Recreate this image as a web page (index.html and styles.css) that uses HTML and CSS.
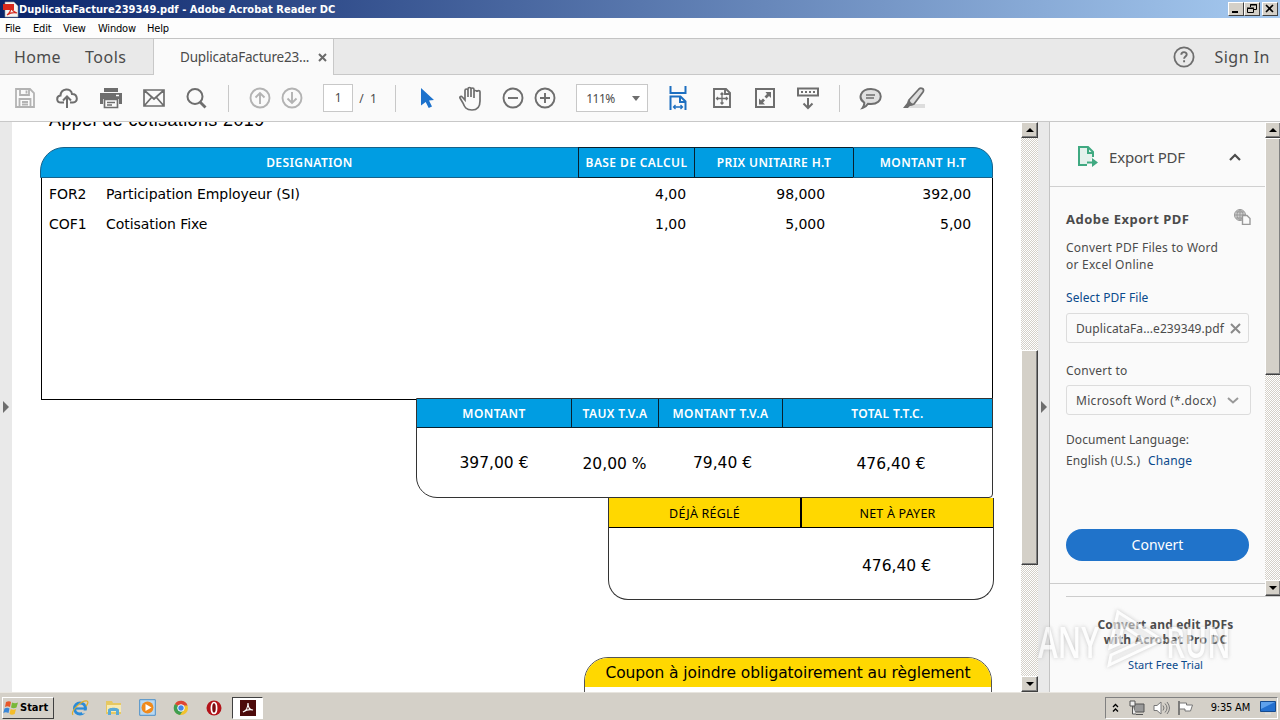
FILE: index.html
```html
<!DOCTYPE html>
<html lang="en">
<head>
  <meta charset="UTF-8">
  <title>DuplicataFacture239349.pdf - Adobe Acrobat Reader DC</title>
  <link rel="stylesheet" href="styles.css">
</head>
<body>

<!-- Title bar -->
<div class="titlebar">
  <svg class="app-icon" width="17" height="17" viewBox="0 0 17 17"><path d="M3 1h9l4 4v11H3z" fill="#f4f4f4" stroke="#999" stroke-width=".6"/><path d="M1 3h11v6H1z" fill="#d8281c"/><path d="M5 14c3-2 4-5 4-8 1 4 3 5 6 6-4-1-7 0-10 2z" fill="none" stroke="#d8281c" stroke-width="1.2"/></svg>
  <span class="titlebar-text">DuplicataFacture239349.pdf - Adobe Acrobat Reader DC</span>
  <div class="win-buttons">
    <div class="win-btn"><svg width="14" height="12"><path d="M3 9h6" stroke="#000" stroke-width="2"/></svg></div>
    <div class="win-btn"><svg width="14" height="12" fill="none" stroke="#000"><path d="M5.5 4V1.500h6v5H9M5 2h7M2.500 5.500h6v4h-6zM2 5h7"/></svg></div>
    <div class="win-btn close"><svg width="14" height="12"><path d="M3 2l7 7M10 2l-7 7" stroke="#000" stroke-width="1.600"/></svg></div>
  </div>
</div>

<!-- Menu -->
<div class="menubar">
  <span class="m-file">File</span><span class="m-edit">Edit</span><span class="m-view">View</span><span class="m-window">Window</span><span>Help</span>
</div>

<!-- Tabs -->
<div class="tabs">
  <div class="tabs-left"><span class="home">Home</span><span class="tools">Tools</span></div>
  <div class="tab-active">
    <span>DuplicataFacture23...</span>
    <svg width="9" height="9" viewBox="0 0 9 9"><path d="M1 1l7 7M8 1l-7 7" stroke="#6a6a6a" stroke-width="2"/></svg>
  </div>
  <div class="tabs-right">
    <svg width="22" height="22" viewBox="0 0 22 22" fill="none" stroke="#6e6e6e"><circle cx="11" cy="11" r="9.600" stroke-width="1.800"/><path d="M8.300 8.800c0-3.500 5.400-3.500 5.400-.3 0 2-2.600 2-2.600 4.200M11.100 14.300v2" stroke-width="1.900"/></svg>
    <span>Sign In</span>
  </div>
</div>

<!-- Toolbar -->
<div class="toolbar">
  <div class="tool-group files">
    <svg width="22" height="22" viewBox="0 0 22 22" fill="none" stroke="#b3b3b3" stroke-width="1.800"><path d="M2 2h14l4 4v14H2zM6 2v6h9V2M5.500 20v-8h11v8M8 15h6M8 17.500h6M12.500 3.500v3"/></svg>
    <svg width="24" height="22" viewBox="0 0 24 22" fill="none" stroke="#6e6e6e" stroke-width="2"><path d="M9 15.500H6C1 15.500 1 9 5.500 8.500 6 1 16 .5 17 7c6 0 6.500 8.500 1 8.500h-3M12 21V10M8 13.500l4-4 4 4"/></svg>
    <svg width="24" height="22" viewBox="0 0 24 22"><path d="M5 1h14v4H5zM1 6h22v11h-3v-5H4v5H1z" fill="#6e6e6e"/><path d="M5.500 12.500h13v8h-13zM8 15.500h8M8 18h5" fill="none" stroke="#6e6e6e" stroke-width="1.700"/><path d="M17 8.500h3" stroke="#fff" stroke-width="1.500"/></svg>
    <svg width="24" height="20" viewBox="0 0 24 20" fill="none" stroke="#6e6e6e" stroke-width="1.700"><path d="M2 2h20v16H2zM2.500 2.500L12 11l9.500-8.500M2.500 17.500l7-8M21.500 17.500l-7-8"/></svg>
    <svg width="22" height="22" viewBox="0 0 22 22" fill="none" stroke="#6e6e6e"><circle cx="10" cy="9.500" r="7.500" stroke-width="2"/><path d="M15 15l5.500 5.500" stroke-width="2.800"/></svg>
  </div>
  <div class="sep"></div>
  <div class="tool-group pages">
    <svg width="22" height="22" viewBox="0 0 22 22" fill="none" stroke="#b3b3b3" stroke-width="1.900"><circle cx="11" cy="11" r="9.500"/><path d="M11 17V6M6.500 10.500L11 6l4.500 4.500"/></svg>
    <svg width="22" height="22" viewBox="0 0 22 22" fill="none" stroke="#b3b3b3" stroke-width="1.900"><circle cx="11" cy="11" r="9.500"/><path d="M11 5v11M6.500 11.500L11 16l4.500-4.500"/></svg>
  </div>
  <div class="page-input">1</div>
  <span class="page-total">/&nbsp; 1</span>
  <div class="sep sep-select"></div>
  <svg class="cursor" width="15" height="22" viewBox="0 0 15 22"><path d="M1 1l13 12-5 .5 3 6-3.300 1.500-3-6L1 18.500z" fill="#1d72cc"/></svg>
  <svg class="hand" width="24" height="25" viewBox="0 0 24 25" fill="none" stroke="#6e6e6e" stroke-width="1.700"><path d="M7 14V4.500c0-2 3-2 3 0V11 3c0-2 3-2 3 0v8-7.500c0-2 3-2 3 0V12 6c0-2 3-2 3 0v-.2c0-1.500 3-1.500 3 0V15c0 6-3 9-8 9-6 0-7.500-3-9-7l-3-5c-.7-1.500 1.300-2.300 2.300-1z"/></svg>
  <svg class="zoom-out" width="22" height="22" viewBox="0 0 22 22" fill="none" stroke="#6e6e6e" stroke-width="1.900"><circle cx="11" cy="11" r="9.500"/><path d="M6 11h10"/></svg>
  <svg class="zoom-in" width="22" height="22" viewBox="0 0 22 22" fill="none" stroke="#6e6e6e" stroke-width="1.900"><circle cx="11" cy="11" r="9.500"/><path d="M6 11h10M11 6v10"/></svg>
  <div class="zoom-select"><span>111%</span><svg width="8" height="5"><path d="M0 0h8L4 5z" fill="#6e6e6e"/></svg></div>
  <svg class="fit-width" width="18" height="26" viewBox="0 0 18 26" fill="none" stroke="#1d6fc0" stroke-width="2"><path d="M1.500 1v7h15V1M1.500 25V11.500h10l5 5V25M11 12v5h5.500"/><path d="M4.500 22h9M6.500 20l-2 2 2 2M11.500 20l2 2-2 2" stroke-width="1.300"/></svg>
  <svg class="fit-page" width="20" height="22" viewBox="0 0 20 22" fill="none" stroke="#6e6e6e" stroke-width="1.900"><path d="M2 2h12l4 4v14H2zM13 2v5h5"/><path d="M10 6v11M4.500 11.500h11M8.500 7.500L10 6l1.500 1.500M8.500 15.500L10 17l1.500-1.500M6 10l-1.500 1.500L6 13M14 10l1.500 1.500L14 13" stroke-width="1.300"/></svg>
  <svg class="full-screen" width="20" height="22" viewBox="0 0 20 22"><path d="M1 2h18v18H1z" fill="none" stroke="#6e6e6e" stroke-width="2"/><path d="M10.500 5H16v6l-2-2-2.500 2.500-2-2L12 7zM4 11.500v6h6l-2-2 2-2-2-2-2 2z" fill="#6e6e6e"/></svg>
  <svg class="scroll-mode" width="24" height="24" viewBox="0 0 24 24" fill="none" stroke="#6e6e6e" stroke-width="2"><path d="M2 2.500h20v7H2zM12 12v10M7.500 17.500L12 22l4.500-4.500"/><path d="M5 6h14" stroke-dasharray="2 2"/></svg>
  <div class="sep sep-comment"></div>
  <svg class="comment" width="24" height="23" viewBox="0 0 24 23" fill="#e0e0e0" stroke="#6e6e6e" stroke-width="2"><path d="M12 2c13 0 13 15 0 15l-3-.2c-1.500 2.500-3 3.600-5.500 4.200 1.500-2 2-3.500 1.700-5.500C-1.500 11 1.500 2 12 2z"/><path d="M7 8h9M7 11h8" stroke-width="1.300"/></svg>
  <svg class="highlighter" width="24" height="24" viewBox="0 0 24 24"><path d="M10 18h13v4H7z" fill="#ddd"/><path d="M7 14L17 3c2-2 6 0 4 3L12 18l-4 1z" fill="#ddd" stroke="#6e6e6e" stroke-width="1.800"/><path d="M6 14l6 5-4 1-2 2H1l4-5z" fill="#6e6e6e"/></svg>
</div>

<div class="main">
  <div class="nav-strip"><i class="arrow-right"></i></div>

  <!-- Invoice page -->
  <div class="document">
    <h1>Appel de cotisations 2019</h1>

    <div class="lines-head">
      <div>DESIGNATION</div>
      <div class="dark">BASE DE CALCUL</div>
      <div class="dark">PRIX UNITAIRE H.T</div>
      <div class="last">MONTANT H.T</div>
    </div>
    <div class="lines-body">
      <div class="line"><span>FOR2</span><span>Participation Employeur (SI)</span><span class="num">4,00</span><span class="num">98,000</span><span class="num">392,00</span></div>
      <div class="line"><span>COF1</span><span>Cotisation Fixe</span><span class="num">1,00</span><span class="num">5,000</span><span class="num">5,00</span></div>
    </div>

    <div class="totals">
      <div class="totals-head"><div>MONTANT</div><div>TAUX T.V.A</div><div>MONTANT T.V.A</div><div>TOTAL T.T.C.</div></div>
      <div class="totals-body"><div>397,00 €</div><div class="low">20,00 %</div><div class="vat">79,40 €</div><div class="low ttc">476,40 €</div></div>
    </div>

    <div class="pay">
      <div class="pay-head"><div>DÉJÀ RÉGLÉ</div><div>NET À PAYER</div></div>
      <div class="pay-body"><div></div><div>476,40 €</div></div>
    </div>

    <div class="coupon"><div class="coupon-head">Coupon à joindre obligatoirement au règlement</div></div>
  </div>

  <div class="scrollbar doc-scroll">
    <div class="sb-btn"><i class="up"></i></div>
    <div class="sb-thumb"></div>
    <div class="sb-btn sb-end"><i class="down"></i></div>
  </div>
  <div class="panel-strip"><i class="arrow-right"></i></div>

  <!-- Export panel -->
  <div class="side">
    <div class="side-top">
      <div class="panel">
        <div class="panel-title">
          <svg width="22" height="23" viewBox="0 0 22 23" fill="none" stroke="#3fa981" stroke-width="2"><path d="M10 20H2V2h9l5 5v5" fill="#e4f1ec"/><path d="M11 2v6h5"/><path d="M10 17.500h6" /><path d="M15 13l6 4.500-6 4.500z" fill="#3fa981" stroke="none"/></svg>
          <span>Export PDF</span>
          <svg width="12" height="8" viewBox="0 0 12 8"><path d="M1 7l5-5 5 5" fill="none" stroke="#4b4b4b" stroke-width="2.200"/></svg>
        </div>
        <div class="panel-body">
          <div class="panel-heading"><b>Adobe Export PDF</b>
            <svg width="17" height="16" viewBox="0 0 17 16" fill="none" stroke="#999"><circle cx="6" cy="6" r="5.500" fill="#d0d0d0"/><path d="M6 .5v11M.5 6h11M2 3h8M2 9h6M6 .5c-4 3-4 8 0 11M6 .5c4 3 4 8 0 11"/><path d="M8.500 6.500h4.500l3 3v6H8.500z" fill="#fafafa" stroke-width="1.400"/></svg>
          </div>
          <p class="intro">Convert PDF Files to Word<br>or Excel Online</p>
          <a class="select-file">Select PDF File</a>
          <div class="field"><span>DuplicataFa...e239349.pdf</span><svg width="11" height="11"><path d="M1 1l9 9M10 1l-9 9" stroke="#8a8a8a" stroke-width="2"/></svg></div>
          <p class="convert-label">Convert to</p>
          <div class="field dropdown"><span>Microsoft Word (*.docx)</span><svg width="12" height="7"><path d="M1 1l5 4.500L11 1" fill="none" stroke="#999" stroke-width="2"/></svg></div>
          <p class="lang">Document Language:</p>
          <p class="lang-value">English (U.S.)<a>Change</a></p>
          <div class="convert-btn">Convert</div>
        </div>
      </div>
      <div class="scrollbar side-scroll">
        <div class="sb-btn"><i class="up"></i></div>
        <div class="sb-thumb"></div>
        <div class="sb-btn sb-end"><i class="down"></i></div>
      </div>
    </div>
    <div class="promo">
      <b>Convert and edit PDFs<br>with Acrobat Pro DC</b>
      <a>Start Free Trial</a>
    </div>
  </div>
</div>

<!-- Recorder watermark -->
<div class="watermark"><span>ANY</span><svg width="62" height="66" viewBox="0 0 62 66" fill="rgba(255,255,255,.55)" stroke="#fff" stroke-width="3"><path d="M14 4L58 32 5 57l2-10 33-15-21-14-4 18-9 4z"/></svg><span>RUN</span></div>

<!-- Taskbar -->
<div class="taskbar">
  <div class="start">
    <svg width="16" height="16" viewBox="0 0 16 16"><path d="M3 2c2-1 4-1 5 0L7 7C5 6 3.500 6 2 7z" fill="#e8582a"/><path d="M9 2.500c2 1 4 1 6 0L13.500 7.500c-2 1-4 1-5.500 0z" fill="#79b83a"/><path d="M1.500 8.500c2-1 3.500-1 5 0L5.500 13c-2-1-3.500-1-5.200 0z" fill="#3a87d8"/><path d="M7.700 9c2 1 3.500 1 5.300 0l-1.300 5c-2 1-3.500 1-5.200 0z" fill="#f5bd2a"/></svg>
    <span>Start</span>
  </div>
  <div class="launchers">
    <svg width="18" height="18" viewBox="0 0 18 18"><circle cx="9" cy="9.500" r="5.500" fill="none" stroke="#2a8bd8" stroke-width="3"/><path d="M5 9.500h10" stroke="#2a8bd8" stroke-width="2.200"/><path d="M11 11.500h5v3h-5z" fill="#d4d0c8"/><path d="M2 16C-1 12 11 1 16 2c2 1 0 4-1 5" fill="none" stroke="#e0ae28" stroke-width="1.200"/></svg>
    <svg width="17" height="17" viewBox="0 0 17 17"><path d="M1 2h6l1 2h8v11H1z" fill="#e6c862"/><path d="M2 6h14v7H2z" fill="#f8eab0"/><path d="M3 16v-5c0-3 11-3 11 0v5h-3v-4H6v4z" fill="#5aaad6"/></svg>
    <svg width="17" height="17" viewBox="0 0 17 17"><path d="M.7.700h15.600v15.600H.7z" fill="#b8d8f2" stroke="#4b8fc9"/><circle cx="8.500" cy="8.500" r="6" fill="#f08a1c"/><path d="M6.500 5l6 3.500-6 3.500z" fill="#fff"/></svg>
    <svg width="16" height="16" viewBox="0 0 16 16"><circle cx="8" cy="8" r="7" fill="#f2c22e"/><path d="M8 8L2 4a7 7 0 0112.500 1.500H8z" fill="#dd4536"/><path d="M8 8L2 4a7 7 0 005 11l4-6z" fill="#3f9e50"/><circle cx="8" cy="8" r="3.300" fill="#4285e8" stroke="#fff"/></svg>
    <svg width="16" height="16" viewBox="0 0 16 16"><circle cx="8" cy="8" r="7.500" fill="#b3131a"/><ellipse cx="8" cy="8" rx="2.600" ry="5.500" fill="#7c0a10" stroke="#fff" stroke-width="1.700"/></svg>
  </div>
  <div class="task-active"><svg width="16" height="16" viewBox="0 0 16 16"><path d="M0 0h16v16H0z" fill="#4d0b0b"/><path d="M3 12c3-1 5-5 5-9 0 5 2 7 5 7-4-1-7 0-10 2z" fill="none" stroke="#fff" stroke-width="1.200"/></svg></div>
  <div class="tray">
    <svg class="chev" width="7" height="10" viewBox="0 0 7 10"><path d="M1 4l2.500-2.500L6 4M1 8.500L3.500 6 6 8.500" fill="none" stroke="#000" stroke-width="1.300"/></svg>
    <svg class="net" width="16" height="16" viewBox="0 0 16 16"><path d="M5 4h10v8H5zM7 14.500h7" fill="#999" stroke="#555"/><path d="M1 1h5v5H1zM3.500 6v8H7" fill="#eee" stroke="#555"/></svg>
    <svg class="vol" width="17" height="16" viewBox="0 0 17 16" fill="none" stroke="#777"><path d="M1 5.500h3L8 2v12l-4-3.500H1z" fill="#fff"/><path d="M10 5.500q2 2.500 0 5M12 3.500q4 4.500 0 9M14 2q5 6 0 12"/></svg>
    <svg class="flag" width="17" height="16" viewBox="0 0 17 16"><path d="M2.500 3h7v2h6l-2 6H8V9H2.500" fill="#fff" stroke="#777"/><path d="M2 1v14" stroke="#666" stroke-width="1.600"/></svg>
    <span class="clock">9:35 AM</span>
    <svg class="desk" width="16" height="14" viewBox="0 0 16 14"><path d="M.5.500h15v10H.5z" fill="#2470cf" stroke="#164b8f"/><path d="M1 1h14L1 8z" fill="#5fa1ec"/><path d="M5 12.500h6" stroke="#ddd" stroke-width="2"/></svg>
  </div>
</div>

</body>
</html>
```
FILE: styles.css
```css
* {
  box-sizing: border-box;
}
body {
  margin: 0;
  width: 1280px;
  height: 720px;
  overflow: hidden;
  display: flex;
  flex-direction: column;
  position: relative;
  background: #fafafa;
  font-family: "Noto Sans", sans-serif;
  color: #4b4b4b;
}
p {
  margin: 0;
}
svg {
  display: block;
  flex: none;
}

/* Title bar */
.titlebar {
  height: 18px;
  flex: none;
  display: flex;
  align-items: center;
  padding: 0 2px;
  background: linear-gradient(to right, #0a246a, #a6caf0);
}
.titlebar-text {
  font: bold 11px "DejaVu Sans Condensed", "DejaVu Sans", sans-serif;
  letter-spacing: 0.04px;
  color: #fff;
  white-space: nowrap;
}
.win-buttons {
  display: flex;
  margin-left: auto;
}
.win-btn {
  width: 16px;
  height: 14px;
  background: #d4d0c8;
  border: 1px solid;
  border-color: #fff #404040 #404040 #fff;
}
.win-btn.close {
  margin-left: 2px;
}

/* Menu */
.menubar {
  height: 20px;
  flex: none;
  display: flex;
  align-items: center;
  padding-left: 5px;
  background: #fdfdfd;
  font: 11px "DejaVu Sans Condensed", "DejaVu Sans", sans-serif;
  letter-spacing: -0.2px;
  color: #000;
}
.m-file { width: 28px; }
.m-edit { width: 30px; }
.m-view { width: 35px; }
.m-window { width: 49px; }

/* Tabs */
.tabs {
  height: 37px;
  flex: none;
  display: flex;
  border-top: 1px solid #c4c4c4;
  background: #e9e9e9;
  font-size: 16px;
  letter-spacing: 0.5px;
}
.tabs-left, .tabs-right {
  display: flex;
  align-items: center;
  border-bottom: 1px solid #c8c8c8;
}
.tabs-left {
  width: 154px;
  padding-left: 14px;
  border-right: 1px solid #c8c8c8;
}
.home {
  width: 71px;
  letter-spacing: 0.3px;
}
.tab-active {
  width: 179px;
  display: flex;
  align-items: center;
  padding-left: 26px;
  background: #fafafa;
  font-size: 13.500px;
  letter-spacing: -0.2px;
}
.tab-active svg {
  margin-left: 9px;
}
.tabs-right {
  flex: 1;
  justify-content: flex-end;
  gap: 19px;
  padding-right: 10px;
  border-left: 1px solid #c8c8c8;
}

/* Toolbar */
.toolbar {
  height: 47px;
  flex: none;
  display: flex;
  align-items: center;
  padding-left: 14px;
  border-bottom: 1px solid #c8c8c8;
}
.tool-group {
  display: flex;
  align-items: center;
}
.files {
  gap: 19.3px;
}
.sep {
  width: 1px;
  height: 27px;
  background: #c8c8c8;
}
.files + .sep {
  margin-left: 21px;
}
.pages {
  gap: 10px;
  margin: 0 20px;
}
.page-input {
  width: 30px;
  height: 28px;
  border: 1px solid #c8c8c8;
  background: #fff;
  font-size: 12px;
  line-height: 26px;
  text-align: center;
}
.page-total {
  margin-left: 6px;
  width: 36px;
  font-size: 12px;
}
.sep-select {
  margin-right: 24px;
}
.hand { margin-left: 23px; }
.zoom-out { margin-left: 20px; }
.zoom-in { margin-left: 10px; }
.zoom-select {
  width: 72px;
  height: 28px;
  margin-left: 20px;
  padding: 0 7px 0 9px;
  display: flex;
  align-items: center;
  justify-content: space-between;
  border: 1px solid #c8c8c8;
  background: #fff;
  font-size: 12px;
  letter-spacing: -0.5px;
}
.fit-width { margin-left: 21px; }
.fit-page { margin-left: 25px; }
.full-screen { margin-left: 23px; }
.scroll-mode { margin-left: 21px; }
.sep-comment { margin: 0 19px; }
.highlighter { margin-left: 19px; }

.main {
  flex: 1;
  display: flex;
  min-height: 0;
}
.nav-strip, .panel-strip {
  width: 12px;
  flex: none;
  padding: 279px 0 0 3px;
  background: #e9e9e9;
}
.panel-strip {
  border-right: 1px solid #c4c4c4;
}
.arrow-right {
  display: block;
  width: 0;
  border-left: 6px solid #6e6e6e;
  border-top: 6px solid transparent;
  border-bottom: 6px solid transparent;
}

/* Invoice */
.document {
  width: 1009px;
  flex: none;
  overflow: hidden;
  padding-left: 28px;
  background: #fff;
  color: #000;
  font-family: "DejaVu Sans", sans-serif;
  font-size: 14px;
}
h1 {
  height: 36px;
  margin: -11px 0 0 9px;
  font: 18px/18px "Liberation Sans", sans-serif;
  letter-spacing: 0.38px;
}
.lines-head {
  width: 953px;
  height: 31px;
  display: grid;
  grid-template-columns: 537px 116px 159px 1fr;
  border: 1px solid #17628a;
  border-radius: 24px 20px 0 0;
  background: #009de2;
}
.lines-head, .totals-head {
  color: #fff;
  font: 600 12px/29px "Noto Sans", sans-serif;
  letter-spacing: 0.4px;
  text-align: center;
}
.lines-head .dark {
  margin: -1px 0;
  border: 1px solid #08202e;
  border-right: 0;
  white-space: nowrap;
}
.lines-head .last {
  border-left: 1px solid #08202e;
}
.lines-body {
  width: 952px;
  height: 222px;
  margin-left: 1px;
  padding-top: 1px;
  border: solid #000;
  border-width: 0 1px 1px;
}
.line {
  height: 30px;
  display: grid;
  grid-template-columns: 57px 472px 108px 139px 146px;
  line-height: 30px;
  padding-left: 7px;
  letter-spacing: -0.06px;
}
.num {
  text-align: right;
}
.totals {
  width: 577px;
  height: 100px;
  margin: -2px 0 0 376px;
  border: 1px solid #333;
  border-radius: 0 0 4px 21px;
  background: #fff;
}
.totals-head, .totals-body {
  display: grid;
  grid-template-columns: 154px 87px 124px 1fr;
}
.totals-head {
  height: 29px;
  background: #009de2;
  border-bottom: 1px solid #08202e;
}
.totals-head div + div {
  border-left: 1px solid #08202e;
}
.totals-body {
  line-height: 70px;
  font-size: 15.5px;
  text-align: center;
}
.low {
  padding-top: 1px;
}
.vat {
  padding-left: 5px;
}
.ttc {
  padding-left: 8px;
}
.pay {
  width: 386px;
  height: 102px;
  margin-left: 568px;
  border: 1px solid #333;
  border-top: 0;
  border-radius: 0 0 20px 20px;
}
.pay-head, .pay-body {
  display: grid;
  grid-template-columns: 191px 1fr;
  text-align: center;
}
.pay-head {
  height: 30px;
  background: #ffd800;
  border-bottom: 1px solid #000;
  font: 12.500px/31px "Noto Sans", sans-serif;
  letter-spacing: 0.2px;
}
.pay-head div {
  height: 29px;
}
.pay-head div + div {
  border-left: 2px solid #000;
}
.pay-body {
  line-height: 77px;
  font-size: 15.5px;
}
.coupon {
  width: 408px;
  height: 60px;
  margin: 57px 0 0 544px;
  overflow: hidden;
  border: 1px solid #555;
  border-radius: 24px 24px 0 0;
}
.coupon-head {
  height: 29px;
  background: #ffd800;
  font-size: 15.5px;
  letter-spacing: -0.09px;
  line-height: 30px;
  text-align: center;
}

/* Classic scrollbars */
.scrollbar {
  display: flex;
  flex-direction: column;
  background: repeating-conic-gradient(#fff 0 25%, #d4d0c8 0 50%) 0 0 / 2px 2px;
}
.doc-scroll {
  width: 17px;
  flex: none;
}
.side-scroll {
  width: 16px;
  flex: none;
}
.sb-btn, .sb-thumb {
  background: #d4d0c8;
  border: 1px solid;
  border-color: #fff #404040 #404040 #fff;
  box-shadow: inset -1px -1px #808080;
}
.sb-btn {
  height: 16px;
  display: flex;
  align-items: center;
  justify-content: center;
}
.sb-end {
  margin-top: auto;
}
.sb-btn i {
  border-left: 4px solid transparent;
  border-right: 4px solid transparent;
}
.up {
  border-bottom: 4px solid #000;
}
.down {
  border-top: 4px solid #000;
}
.doc-scroll .sb-thumb {
  margin-top: 212px;
  height: 215px;
}
.side-scroll .sb-thumb {
  height: 237px;
}

/* Export panel */
.side {
  flex: 1;
}
.side-top {
  height: 474px;
  display: flex;
}
.panel {
  flex: 1;
  height: 462px;
  border-bottom: 1px solid #ccc;
}
.panel-title {
  height: 65px;
  display: flex;
  align-items: center;
  padding: 5px 24px 0 27px;
  border-bottom: 1px solid #d0d0d0;
  font-size: 15px;
  letter-spacing: -0.2px;
}
.panel-title span {
  flex: 1;
  margin-left: 10px;
}
.panel-body {
  padding: 23px 14px 0 16px;
  font-size: 12px;
  letter-spacing: 0.25px;
}
.panel-heading {
  display: flex;
  justify-content: space-between;
  height: 29px;
  font-size: 13px;
  line-height: 18px;
  letter-spacing: 0.5px;
}
.panel-heading svg {
  margin-top: -1px;
}
.intro {
  line-height: 17px;
}
a {
  color: #0a4a8c;
}
.select-file {
  display: block;
  margin: 16px 0 6px;
  line-height: 18px;
  letter-spacing: 0.1px;
}
.field {
  width: 183px;
  height: 30px;
  display: flex;
  align-items: center;
  justify-content: space-between;
  padding: 0 7px 0 9px;
  border: 1px solid #dcdcdc;
  border-radius: 3px;
  letter-spacing: 0.08px;
  white-space: nowrap;
}
.convert-label {
  margin: 19px 0 5px;
  line-height: 18px;
}
.dropdown {
  width: 185px;
  padding-right: 11px;
  letter-spacing: 0.3px;
}
.lang {
  margin-top: 15px;
  line-height: 20px;
  letter-spacing: 0.1px;
}
.lang-value {
  line-height: 22px;
  letter-spacing: 0.1px;
}
.lang-value a {
  margin-left: 8px;
}
.convert-btn {
  width: 183px;
  height: 32px;
  margin-top: 57px;
  border-radius: 16px;
  background: #2073ca;
  color: #fff;
  font-size: 14px;
  line-height: 32px;
  letter-spacing: 0;
  text-align: center;
}
.promo {
  margin-left: 16px;
  padding: 20px 16px 0 0;
  border-top: 1px solid #ccc;
  text-align: center;
}
.promo b {
  display: block;
  font-size: 12px;
  line-height: 15px;
  letter-spacing: 0.2px;
}
.promo a {
  display: block;
  margin-top: 9px;
  font-size: 11px;
  line-height: 18px;
}

.watermark {
  position: absolute;
  left: 1038px;
  top: 608px;
  display: flex;
  align-items: center;
  opacity: 0.65;
  color: #fff;
  font: 600 44px "Open Sans", sans-serif;
  filter: drop-shadow(0 0 2px #aaa);
}
.watermark span {
  width: 66px;
  transform: scaleX(0.68);
  transform-origin: left;
}

/* Taskbar */
.taskbar {
  height: 28px;
  flex: none;
  display: flex;
  align-items: center;
  padding: 2px 2px 0;
  border-top: 1px solid #e8e5df;
  background: #d4d0c8;
  color: #000;
}
.start {
  width: 52px;
  height: 22px;
  display: flex;
  align-items: center;
  gap: 1px;
  border: 1px solid;
  border-color: #fff #404040 #404040 #fff;
  font: bold 11px "DejaVu Sans Condensed", "DejaVu Sans", sans-serif;
}
.launchers {
  display: flex;
  align-items: center;
  gap: 17px;
  margin-left: 17px;
}
.launchers svg:nth-child(n+2) {
  margin-left: -1px;
  margin-right: 1px;
}
.task-active {
  width: 31px;
  height: 22px;
  margin-left: 9px;
  display: flex;
  align-items: center;
  justify-content: center;
  border: 1px solid;
  border-color: #404040 #fff #fff #404040;
  background: #fff;
}
.tray {
  width: 173px;
  height: 22px;
  margin-left: auto;
  display: flex;
  align-items: center;
  padding: 0 1px 0 6px;
  border: 1px solid;
  border-color: #808080 #fff #fff #808080;
  font: 11px "DejaVu Sans Condensed", "DejaVu Sans", sans-serif;
}
.net { margin-left: 10px; }
.vol { margin-left: 8px; }
.flag { margin-left: 7px; }
.clock {
  margin-left: auto;
  letter-spacing: -0.2px;
}
.desk { margin-left: 10px; }
```
